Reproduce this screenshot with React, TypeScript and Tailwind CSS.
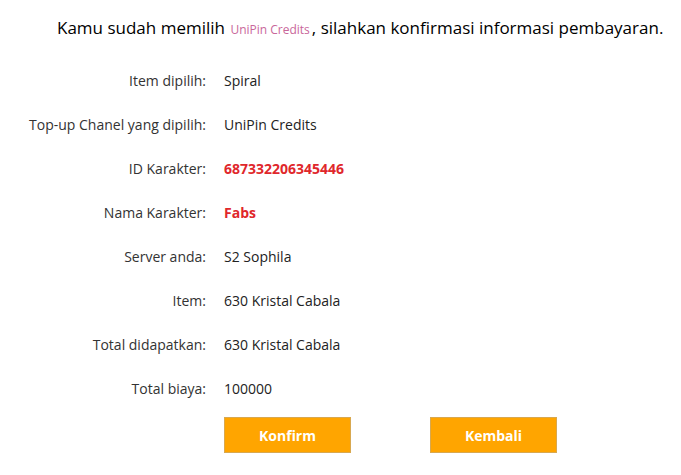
const rows: { label: string; value: string; accent?: boolean }[] = [
  { label: 'Item dipilih:', value: 'Spiral' },
  { label: 'Top-up Chanel yang dipilih:', value: 'UniPin Credits' },
  { label: 'ID Karakter:', value: '687332206345446', accent: true },
  { label: 'Nama Karakter:', value: 'Fabs', accent: true },
  { label: 'Server anda:', value: 'S2 Sophila' },
  { label: 'Item:', value: '630 Kristal Cabala' },
  { label: 'Total didapatkan:', value: '630 Kristal Cabala' },
  { label: 'Total biaya:', value: '100000' },
];

export default function App() {
  return (
    <div className="w-[681px] h-[475px] bg-white text-[#222] font-['Open_Sans','Noto_Sans',sans-serif]">
      <p className="pt-[15px] pl-[57px] text-[17px] leading-[26px] text-black whitespace-nowrap">
        Kamu sudah memilih <span className="text-[12px] text-[#c9679a] ml-[1px] mr-[2px]">UniPin Credits</span>, silahkan konfirmasi informasi pembayaran.
      </p>

      <div className="mt-[15px] grid grid-cols-[206px_1fr] gap-x-[18px] text-[14px]">
        {rows.map((r) => (
          <div key={r.label} className="contents">
            <div className="h-[44px] flex items-center justify-end text-[#333] whitespace-nowrap">{r.label}</div>
            <div className={`h-[44px] flex items-center ${r.accent ? 'font-bold text-[#e0272b]' : 'text-[#222]'}`}>{r.value}</div>
          </div>
        ))}
      </div>

      <div className="mt-[7px] pl-[224px] flex gap-[79px]">
        <button className="w-[127px] h-[36px] bg-[#ffa500] border border-[#d8a850] text-white font-bold text-[14px]">Konfirm</button>
        <button className="w-[127px] h-[36px] bg-[#ffa500] border border-[#d8a850] text-white font-bold text-[14px]">Kembali</button>
      </div>
    </div>
  );
}
